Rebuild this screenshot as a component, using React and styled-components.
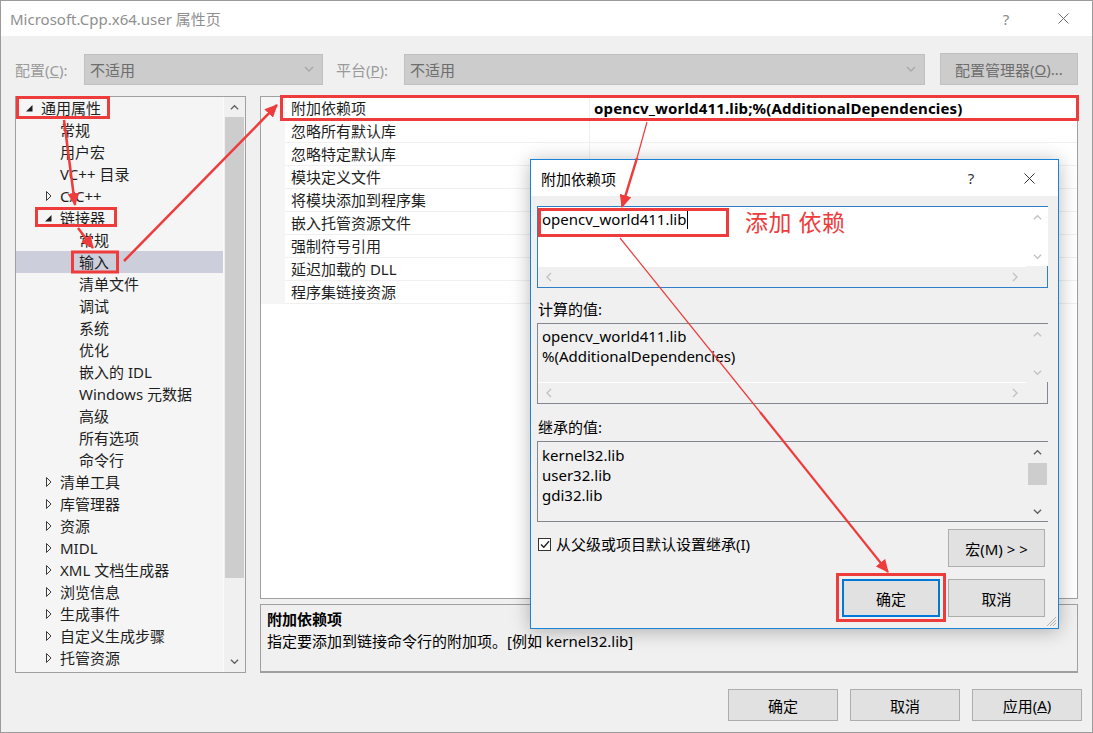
import React from "react";
import styled, { createGlobalStyle } from "styled-components";

const FONT = `"Noto Sans", "Noto Sans CJK SC", sans-serif`;
const RED = "#ee3b3b";

const GlobalStyle = createGlobalStyle`
  html, body { margin: 0; padding: 0; background: #f0f0f0; }
  body { font-family: ${FONT}; font-size: 15px; color: #1e1e1e; }
  * { box-sizing: border-box; }
`;

const treeItems = [
  { label: "通用属性", level: 0, exp: "open" },
  { label: "常规", level: 1 },
  { label: "用户宏", level: 1 },
  { label: "VC++ 目录", level: 1 },
  { label: "C/C++", level: 1, exp: "closed" },
  { label: "链接器", level: 1, exp: "open" },
  { label: "常规", level: 2 },
  { label: "输入", level: 2, selected: true },
  { label: "清单文件", level: 2 },
  { label: "调试", level: 2 },
  { label: "系统", level: 2 },
  { label: "优化", level: 2 },
  { label: "嵌入的 IDL", level: 2 },
  { label: "Windows 元数据", level: 2 },
  { label: "高级", level: 2 },
  { label: "所有选项", level: 2 },
  { label: "命令行", level: 2 },
  { label: "清单工具", level: 1, exp: "closed" },
  { label: "库管理器", level: 1, exp: "closed" },
  { label: "资源", level: 1, exp: "closed" },
  { label: "MIDL", level: 1, exp: "closed" },
  { label: "XML 文档生成器", level: 1, exp: "closed" },
  { label: "浏览信息", level: 1, exp: "closed" },
  { label: "生成事件", level: 1, exp: "closed" },
  { label: "自定义生成步骤", level: 1, exp: "closed" },
  { label: "托管资源", level: 1, exp: "closed" },
];

const props = [
  { name: "附加依赖项", value: "opencv_world411.lib;%(AdditionalDependencies)" },
  { name: "忽略所有默认库" },
  { name: "忽略特定默认库" },
  { name: "模块定义文件" },
  { name: "将模块添加到程序集" },
  { name: "嵌入托管资源文件" },
  { name: "强制符号引用" },
  { name: "延迟加载的 DLL" },
  { name: "程序集链接资源" },
];

/* ---------- window ---------- */

const Window = styled.div`
  position: relative;
  width: 1093px;
  height: 733px;
  border: 1px solid #9b9b9b;
  background: #f0f0f0;
  overflow: hidden;
  display: flex;
  flex-direction: column;
`;

const TitleBar = styled.div`
  height: 35px;
  flex-shrink: 0;
  background: #fff;
  display: flex;
  align-items: center;
  padding-left: 9px;
`;

const TitleText = styled.span`
  font-size: 15px;
  color: #8f8f8f;
  line-height: 20px;
`;

const Captions = styled.div`
  margin-left: auto;
  display: flex;
`;

const CaptionButton = styled.span`
  width: ${p => p.$w}px;
  height: 35px;
  display: flex;
  align-items: center;
  justify-content: center;
  color: ${p => p.$color || "#8a8a8a"};
  font-size: 15px;
`;

const CloseIcon = ({ color = "#6a6a6a" }) => (
  <svg width="11" height="11" viewBox="0 0 11 11">
    <path d="M0.5 0.5 L10.5 10.5 M10.5 0.5 L0.5 10.5" stroke={color} strokeWidth="1" fill="none" />
  </svg>
);

const ChevronSvg = styled.svg`
  transform: rotate(${p => p.$rot}deg);
  flex-shrink: 0;
`;

const Chevron = ({ dir = "down", color = "#606060", size = 9 }) => {
  const rot = { up: 180, down: 0, left: 90, right: -90 }[dir];
  return (
    <ChevronSvg $rot={rot} width={size} height={size} viewBox="0 0 10 10">
      <polyline points="1,3 5,7 9,3" fill="none" stroke={color} strokeWidth="1.4" />
    </ChevronSvg>
  );
};

/* ---------- config row ---------- */

const ConfigRow = styled.div`
  display: flex;
  align-items: center;
  height: 32px;
  margin: 17px 14px 0 14px;
`;

const ConfigLabel = styled.span`
  width: ${p => p.$w}px;
  margin-left: ${p => p.$ml || 0}px;
  color: #9a9a9a;
  font-size: 15px;
  white-space: nowrap;
`;

const Combo = styled.div`
  width: ${p => p.$w}px;
  height: 31px;
  background: #cccccc;
  border: 1px solid #c0c0c0;
  display: flex;
  align-items: center;
  justify-content: space-between;
  padding: 0 8px 0 5px;
  color: #6d6d6d;
`;

const ConfigButton = styled.div`
  margin-left: auto;
  width: 138px;
  height: 32px;
  background: #cccccc;
  border: 1px solid #c0c0c0;
  display: flex;
  align-items: center;
  justify-content: center;
  color: #6d6d6d;
`;

/* ---------- main area ---------- */

const Main = styled.div`
  display: flex;
  gap: 14px;
  height: 577px;
  margin: 11px 14px 0 14px;
`;

const Tree = styled.div`
  width: 231px;
  height: 100%;
  border: 1px solid #a0a0a0;
  background: #f5f5f5;
  display: flex;
`;

const TreeList = styled.div`
  flex: 1;
  overflow: hidden;
`;

const TreeRow = styled.div`
  display: flex;
  align-items: center;
  height: 22px;
  line-height: 22px;
  padding-left: ${p => 9 + p.$level * 19}px;
  background: ${p => (p.$selected ? "#cccedb" : "transparent")};
  white-space: nowrap;
  color: #1e1e1e;
`;

const Expander = styled.span`
  width: 16px;
  height: 22px;
  flex-shrink: 0;
  display: flex;
`;

const ExpandGlyph = ({ exp }) => (
  <svg width="16" height="22" viewBox="0 0 16 22">
    {exp === "open" ? (
      <polygon points="7.5,8 7.5,14.5 1,14.5" fill="#1e1e1e" />
    ) : exp === "closed" ? (
      <polygon points="2.5,6.5 7,11 2.5,15.5" fill="none" stroke="#3c3c3c" strokeWidth="1" />
    ) : null}
  </svg>
);

const VScroll = styled.div`
  width: 22px;
  display: flex;
  flex-direction: column;
  background: ${p => p.$bg || "#f0f0f0"};
  border-left: 1px solid ${p => p.$line || "#f0f0f0"};
`;

const ScrollBtn = styled.div`
  height: ${p => p.$h || 20}px;
  display: flex;
  align-items: center;
  justify-content: center;
  flex-shrink: 0;
`;

const ScrollTrack = styled.div`
  flex: 1;
  padding: ${p => p.$offset || 0}px 1px 0 1px;
`;

const Thumb = styled.div`
  height: ${p => p.$h}px;
  background: #cdcdcd;
`;

const RightCol = styled.div`
  flex: 1;
  display: flex;
  flex-direction: column;
  gap: 5px;
`;

const PropGrid = styled.div`
  height: 503px;
  border: 1px solid #a0a0a0;
  background: #fff;
`;

const PropRow = styled.div`
  display: grid;
  grid-template-columns: 24px 305px 1fr;
  height: 23px;
`;

const Gutter = styled.div`
  background: #f5f5f5;
`;

const NameCell = styled.div`
  padding-left: 6px;
  line-height: 22px;
  border-bottom: 1px solid #f0f0f0;
  border-right: 1px solid #f0f0f0;
  white-space: nowrap;
  color: #1e1e1e;
`;

const ValueCell = styled.div`
  padding-left: 4px;
  line-height: 22px;
  border-bottom: 1px solid #f0f0f0;
  font-weight: 700;
  letter-spacing: 0.15px;
  color: #000;
  white-space: nowrap;
`;

const Description = styled.div`
  height: 69px;
  border: 1px solid #a0a0a0;
  border-bottom-width: 2px;
  padding: 3px 6px;
  line-height: 22px;
  color: #000;
`;

const DescTitle = styled.div`
  font-weight: 700;
`;

const Footer = styled.div`
  display: flex;
  justify-content: flex-end;
  gap: 12px;
  margin-top: 16px;
  padding-right: 10px;
`;

const Button = styled.div`
  width: ${p => p.$w || 110}px;
  height: ${p => p.$h || 32}px;
  background: #e1e1e1;
  border: 1px solid ${p => (p.$default ? "#0078d7" : "#adadad")};
  box-shadow: ${p => (p.$default ? "inset 0 0 0 1px #0078d7" : "none")};
  display: flex;
  align-items: center;
  justify-content: center;
  color: #000;
  white-space: nowrap;
`;

/* ---------- dialog ---------- */

const Dialog = styled.div`
  position: absolute;
  left: 529px;
  top: 158px;
  width: 529px;
  height: 470px;
  border: 1px solid #1883d7;
  background: #f0f0f0;
  box-shadow: 0 2px 18px rgba(0, 0, 0, 0.28);
  display: flex;
  flex-direction: column;
  z-index: 5;
`;

const DialogTitle = styled.div`
  height: 36px;
  flex-shrink: 0;
  background: #fff;
  display: flex;
  align-items: center;
  padding-left: 10px;
  color: #000;
`;

const DialogBody = styled.div`
  flex: 1;
  padding: 10px 10px 0 6px;
  display: flex;
  flex-direction: column;
`;

const TextBox = styled.div`
  height: ${p => p.$h}px;
  flex-shrink: 0;
  border: 1px solid ${p => p.$border};
  background: ${p => p.$bg};
  display: grid;
  grid-template-columns: 1fr 21px;
  grid-template-rows: 1fr ${p => (p.$hscroll ? "21px" : "0")};
`;

const TextContent = styled.div`
  padding: ${p => p.$pt || 3}px 4px 0 4px;
  line-height: 20px;
  color: #000;
  white-space: pre;
  overflow: hidden;
`;

const Caret = styled.span`
  display: inline-block;
  width: 1px;
  height: 18px;
  background: #000;
  vertical-align: -4px;
  margin-left: 1px;
`;

const HScroll = styled.div`
  display: flex;
  align-items: center;
  justify-content: space-between;
  padding: 0 6px;
  background: #f0f0f0;
  border-top: 1px solid #fff;
`;

const Corner = styled.div`
  background: #f0f0f0;
`;

const BoxLabel = styled.div`
  height: ${p => p.$h}px;
  padding-top: ${p => p.$pt}px;
  padding-left: 1px;
  line-height: 20px;
  color: #000;
  flex-shrink: 0;
`;

const DialogRow = styled.div`
  display: flex;
  justify-content: ${p => p.$justify || "space-between"};
  align-items: flex-start;
  gap: 8px;
  margin-top: ${p => p.$mt}px;
  padding: 0 3px 0 1px;
`;

const CheckLabel = styled.label`
  display: flex;
  align-items: center;
  gap: 5px;
  margin-top: 5px;
  line-height: 20px;
  color: #000;
`;

const CheckBox = styled.span`
  width: 13px;
  height: 13px;
  border: 1px solid #333;
  background: #fff;
  display: flex;
  align-items: center;
  justify-content: center;
`;

const Grip = styled.svg`
  position: absolute;
  right: 1px;
  bottom: 1px;
`;

/* ---------- annotations ---------- */

const Overlay = styled.svg`
  position: absolute;
  left: -1px;
  top: -1px;
  width: 1093px;
  height: 733px;
  pointer-events: none;
  z-index: 10;
`;

const AnnotationText = styled.span`
  position: absolute;
  left: 744px;
  top: 206px;
  font-size: 23px;
  line-height: 30px;
  color: ${RED};
  letter-spacing: 0.5px;
  z-index: 10;
`;

const Annotations = () => (
  <Overlay viewBox="0 0 1093 733">
    <defs>
      <marker id="ah" markerUnits="userSpaceOnUse" markerWidth="14" markerHeight="12" refX="12" refY="6" orient="auto">
        <polygon points="0,0 13,6 0,12" fill={RED} />
      </marker>
    </defs>
    <g fill="none" stroke={RED} strokeWidth="3">
      <rect x="17.5" y="97.5" width="91" height="20" />
      <rect x="36.5" y="208.5" width="79" height="17" />
      <rect x="72.5" y="252" width="45" height="20" />
      <rect x="281.5" y="96.5" width="796" height="23" />
      <rect x="539.5" y="209.5" width="188" height="26" />
      <rect x="837.5" y="574.5" width="107" height="46" />
    </g>
    <g stroke={RED} fill="none">
      <line x1="64" y1="120" x2="75" y2="205" strokeWidth="2.5" markerEnd="url(#ah)" />
      <line x1="78" y1="228" x2="93" y2="248" strokeWidth="2.5" markerEnd="url(#ah)" />
      <line x1="124" y1="261" x2="277" y2="105" strokeWidth="2.5" markerEnd="url(#ah)" />
      <line x1="647" y1="122" x2="637" y2="158" strokeWidth="1.2" />
      <line x1="637" y1="158" x2="622" y2="207" strokeWidth="2.5" markerEnd="url(#ah)" />
      <line x1="620" y1="238" x2="760" y2="412" strokeWidth="1.2" />
      <line x1="760" y1="412" x2="888" y2="572" strokeWidth="2.2" markerEnd="url(#ah)" />
    </g>
  </Overlay>
);

/* ---------- app ---------- */

export default function App() {
  return (
    <>
      <GlobalStyle />
      <Window>
        <TitleBar>
          <TitleText>Microsoft.Cpp.x64.user 属性页</TitleText>
          <Captions>
            <CaptionButton $w={56}>?</CaptionButton>
            <CaptionButton $w={58}>
              <CloseIcon />
            </CaptionButton>
          </Captions>
        </TitleBar>

        <ConfigRow>
          <ConfigLabel $w={69}>
            配置(<u>C</u>):
          </ConfigLabel>
          <Combo $w={239}>
            不适用
            <Chevron color="#a8a8a8" size={10} />
          </Combo>
          <ConfigLabel $w={68} $ml={13}>
            平台(<u>P</u>):
          </ConfigLabel>
          <Combo $w={521}>
            不适用
            <Chevron color="#a8a8a8" size={10} />
          </Combo>
          <ConfigButton>
            配置管理器(<u>O</u>)...
          </ConfigButton>
        </ConfigRow>

        <Main>
          <Tree>
            <TreeList>
              {treeItems.map((it, i) => (
                <TreeRow key={i} $level={it.level} $selected={it.selected}>
                  <Expander>
                    <ExpandGlyph exp={it.exp} />
                  </Expander>
                  {it.label}
                </TreeRow>
              ))}
            </TreeList>
            <VScroll $line="#fafafa">
              <ScrollBtn $h={20}>
                <Chevron dir="up" color="#606060" />
              </ScrollBtn>
              <ScrollTrack>
                <Thumb $h={461} />
              </ScrollTrack>
              <ScrollBtn $h={22}>
                <Chevron dir="down" color="#606060" />
              </ScrollBtn>
            </VScroll>
          </Tree>

          <RightCol>
            <PropGrid>
              {props.map((p, i) => (
                <PropRow key={i}>
                  <Gutter />
                  <NameCell>{p.name}</NameCell>
                  <ValueCell>{p.value || ""}</ValueCell>
                </PropRow>
              ))}
            </PropGrid>
            <Description>
              <DescTitle>附加依赖项</DescTitle>
              <div>指定要添加到链接命令行的附加项。[例如 kernel32.lib]</div>
            </Description>
          </RightCol>
        </Main>

        <Footer>
          <Button>确定</Button>
          <Button>取消</Button>
          <Button>
            应用(<u>A</u>)
          </Button>
        </Footer>

        <Dialog>
          <DialogTitle>
            附加依赖项
            <Captions>
              <CaptionButton $w={58} $color="#333">?</CaptionButton>
              <CaptionButton $w={58}>
                <CloseIcon color="#333" />
              </CaptionButton>
            </Captions>
          </DialogTitle>
          <DialogBody>
            <TextBox $h={82} $border="#2f7fc8" $bg="#fff" $hscroll>
              <TextContent $pt={2}>
                opencv_world411.lib
                <Caret />
              </TextContent>
              <VScroll $bg="#fff" $line="#fff">
                <ScrollBtn $h={20}>
                  <Chevron dir="up" color="#c2c2c2" />
                </ScrollBtn>
                <ScrollTrack />
                <ScrollBtn $h={20}>
                  <Chevron dir="down" color="#c2c2c2" />
                </ScrollBtn>
              </VScroll>
              <HScroll>
                <Chevron dir="left" color="#c2c2c2" size={10} />
                <Chevron dir="right" color="#c2c2c2" size={10} />
              </HScroll>
              <Corner />
            </TextBox>

            <BoxLabel $h={35} $pt={11}>计算的值:</BoxLabel>
            <TextBox $h={81} $border="#828790" $bg="#f0f0f0" $hscroll>
              <TextContent $pt={2}>
                {"opencv_world411.lib\n%(AdditionalDependencies)"}
              </TextContent>
              <VScroll $bg="#f0f0f0">
                <ScrollBtn $h={20}>
                  <Chevron dir="up" color="#c2c2c2" />
                </ScrollBtn>
                <ScrollTrack />
                <ScrollBtn $h={20}>
                  <Chevron dir="down" color="#c2c2c2" />
                </ScrollBtn>
              </VScroll>
              <HScroll>
                <Chevron dir="left" color="#c2c2c2" size={10} />
                <Chevron dir="right" color="#c2c2c2" size={10} />
              </HScroll>
              <Corner />
            </TextBox>

            <BoxLabel $h={37} $pt={13}>继承的值:</BoxLabel>
            <TextBox $h={81} $border="#828790" $bg="#f0f0f0">
              <TextContent $pt={3}>{"kernel32.lib\nuser32.lib\ngdi32.lib"}</TextContent>
              <VScroll $bg="#f0f0f0">
                <ScrollBtn $h={20}>
                  <Chevron dir="up" color="#606060" />
                </ScrollBtn>
                <ScrollTrack $offset={1}>
                  <Thumb $h={22} />
                </ScrollTrack>
                <ScrollBtn $h={20}>
                  <Chevron dir="down" color="#606060" />
                </ScrollBtn>
              </VScroll>
            </TextBox>

            <DialogRow $mt={7}>
              <CheckLabel>
                <CheckBox>
                  <svg width="10" height="9" viewBox="0 0 10 9">
                    <polyline points="1,4.5 3.8,7.3 9,1.2" fill="none" stroke="#222" strokeWidth="1.4" />
                  </svg>
                </CheckBox>
                从父级或项目默认设置继承(I)
              </CheckLabel>
              <Button $w={97} $h={38}>
                宏(M) &gt; &gt;
              </Button>
            </DialogRow>
            <DialogRow $mt={12} $justify="flex-end">
              <Button $w={98} $h={38} $default>
                确定
              </Button>
              <Button $w={97} $h={38}>
                取消
              </Button>
            </DialogRow>
          </DialogBody>
          <Grip width="12" height="12" viewBox="0 0 12 12">
            <g stroke="#b0b0b0" strokeWidth="1">
              <line x1="11" y1="2" x2="2" y2="11" />
              <line x1="11" y1="5" x2="5" y2="11" />
              <line x1="11" y1="8" x2="8" y2="11" />
            </g>
          </Grip>
        </Dialog>

        <AnnotationText>添加 依赖</AnnotationText>
        <Annotations />
      </Window>
    </>
  );
}
